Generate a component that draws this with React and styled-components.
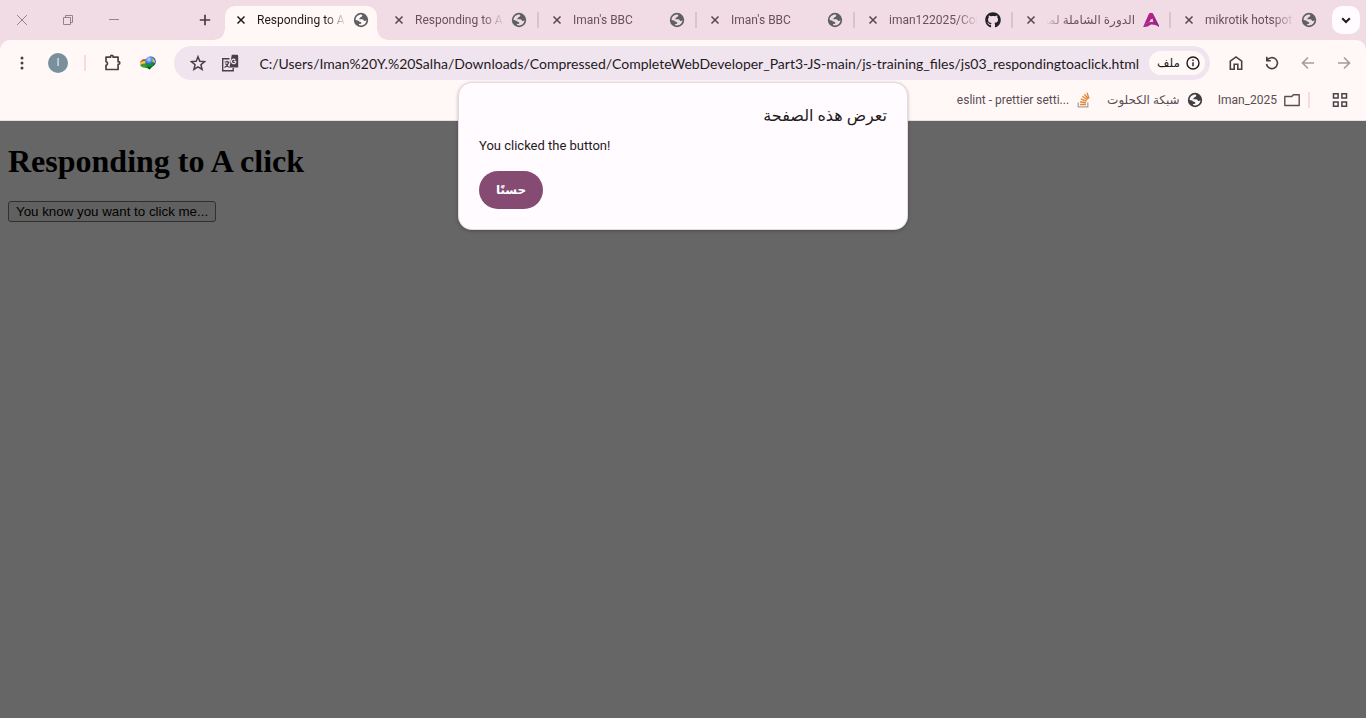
import React from "react";
import styled, { createGlobalStyle, css } from "styled-components";
import { FaGithub } from "react-icons/fa";

const ui = `Roboto, "Open Sans", "DejaVu Sans", sans-serif`;

const GlobalStyle = createGlobalStyle`
  * { box-sizing: border-box; }
  html, body { margin: 0; height: 100%; }
  #root { min-height: 100%; display: flex; flex-direction: column; background: #f1dce5; }
  button { font-family: ${ui}; cursor: pointer; }
`;

const Browser = styled.div`
  position: relative;
  flex: 1;
  min-height: 100vh;
  display: flex;
  flex-direction: column;
  font-family: ${ui};
  color: #1f1a1d;
`;

const TabStrip = styled.header`
  height: 40px;
  display: flex;
  align-items: center;
  padding-right: 6px;
  background: #f1dce5;
`;

const PlainButton = styled.button`
  border: 0;
  padding: 0;
  background: none;
  color: inherit;
  display: flex;
  align-items: center;
  justify-content: center;
  flex: none;
`;

const WindowButtons = styled.div`
  display: flex;
  width: 137px;
  flex: none;
  color: #96828b;
`;

const WindowButton = styled(PlainButton)`
  width: 46px;
  height: 40px;
`;

const NewTabButton = styled(PlainButton)`
  width: 28px;
  height: 28px;
  margin: 0 6px 0 54px;
  color: #4c3a43;
`;

const Tabs = styled.nav`
  flex: 1;
  min-width: 0;
  display: flex;
  align-self: stretch;
  align-items: flex-end;
  gap: 6px;
`;

const flare = css`
  content: "";
  position: absolute;
  bottom: 0;
  width: 10px;
  height: 10px;
`;

const TabBox = styled.div`
  position: relative;
  display: flex;
  align-items: center;
  width: 152px;
  height: 34px;
  padding: 0 8px 6px;
  color: ${(p) => (p.$active ? "#1f1a1d" : "#6a505c")};
  border-radius: 10px 10px 0 0;
  ${(p) =>
    p.$active
      ? css`
          background: #fff8f7;
          &::before {
            ${flare}
            left: -10px;
            background: radial-gradient(circle at 0 0, #f1dce5 9px, #fff8f7 10px);
          }
          &::after {
            ${flare}
            right: -10px;
            background: radial-gradient(circle at 100% 0, #f1dce5 9px, #fff8f7 10px);
          }
        `
      : p.$divided &&
        css`
          &::after {
            content: "";
            position: absolute;
            right: -4px;
            top: 6px;
            width: 2px;
            height: 16px;
            background: #d8c3cb;
          }
        `}
`;

const CloseButton = styled(PlainButton)`
  width: 16px;
  height: 16px;
  margin-right: 8px;
  color: ${(p) => (p.$active ? "#1f1a1d" : "#59434e")};
`;

const TabTitle = styled.a`
  width: 88px;
  margin-right: 8px;
  white-space: nowrap;
  font-size: 12px;
  line-height: 22px;
  color: inherit;
  text-decoration: none;
  mask-image: linear-gradient(
    ${(p) => (p.dir === "rtl" ? "to left" : "to right")},
    #000 68px,
    transparent 90px
  );
`;

const TabIcon = styled.span`
  display: flex;
  width: 16px;
  justify-content: center;
  flex: none;
`;

const TabSearch = styled(PlainButton)`
  width: 28px;
  height: 28px;
  border-radius: 10px;
  background: #fffbff;
  color: #1f1a1d;
`;

const Toolbars = styled.div`
  background: #fff8f7;
  border-radius: 10px 10px 0 0;
  border-bottom: 1px solid #e9dfe1;
  height: 81px;
`;

const AddressRow = styled.div`
  display: flex;
  align-items: center;
  height: 46px;
  padding: 0 4px;
  color: #4c4046;
`;

const ToolButton = styled(PlainButton)`
  width: 36px;
  height: 34px;
  opacity: ${(p) => (p.disabled ? 0.5 : 1)};
`;

const Avatar = styled.span`
  width: 20px;
  height: 20px;
  border-radius: 50%;
  background: #78909c;
  color: #eceff1;
  font-size: 11px;
  line-height: 20px;
  text-align: center;
`;

const Divider = styled.span`
  width: 2px;
  height: 16px;
  margin: 0 8px;
  background: #fbd9e4;
  flex: none;
`;

const AddressBar = styled.div`
  flex: 1;
  min-width: 0;
  height: 34px;
  margin: 0 8px;
  padding: 0 5px 0 8px;
  display: flex;
  align-items: center;
  border-radius: 17px;
  background: #f0e5ef;
`;

const BarButton = styled(PlainButton)`
  width: 32px;
  height: 32px;
`;

const UrlInput = styled.input`
  flex: 1;
  min-width: 0;
  height: 24px;
  margin: 0 10px 0 8px;
  padding: 0;
  border: 0;
  outline: 0;
  background: none;
  color: #1f1a1d;
  font-family: Lato, "Open Sans", sans-serif;
  font-size: 14px;
  text-align: right;
`;

const FileChip = styled(PlainButton)`
  width: 56px;
  height: 24px;
  padding-left: 3px;
  gap: 6px;
  border-radius: 12px;
  background: #fff8f7;
  color: #1f1a1d;
  font-size: 12px;
`;

const BookmarkRow = styled.div`
  display: flex;
  align-items: center;
  justify-content: flex-end;
  height: 28px;
  padding-right: 18px;
  color: #4c4046;
`;

const Bookmark = styled.a`
  display: flex;
  align-items: center;
  gap: 7px;
  margin-left: 15px;
  font-size: 12px;
  line-height: 20px;
  color: #5a4c53;
  text-decoration: none;
  white-space: nowrap;
`;

const AppsButton = styled(PlainButton)`
  width: 16px;
  height: 16px;
  margin-left: 14px;
`;

const Page = styled.main`
  flex: 1;
  padding: 0 8px;
  background: #666;
  color: #000;
`;

const Heading = styled.h1`
  margin: 22px 0 21px;
  font-family: "Liberation Serif", serif;
  font-size: 32px;
  line-height: 37px;
`;

const PageButton = styled.button`
  && { font-family: "Liberation Sans", sans-serif; }
  display: block;
  height: 21px;
  padding: 0 7px;
  border: 1px solid #303030;
  border-radius: 3px;
  background: #606060;
  color: #000;
`;

const Dialog = styled.section`
  position: absolute;
  top: 83px;
  left: 50%;
  transform: translateX(-50%);
  width: 448px;
  padding: 21px 20px 20px;
  border-radius: 13px;
  background: #fffbff;
  box-shadow: 0 0 0 1px #e4dadf, 0 1px 4px rgba(0, 0, 0, 0.4);
`;

const DialogTitle = styled.h2`
  margin: 0 0 8px;
  font-size: 16px;
  line-height: 24px;
  font-weight: 500;
`;

const DialogText = styled.p`
  margin: 0 0 15px;
  font-size: 13px;
  line-height: 20px;
`;

const OkButton = styled(PlainButton)`
  width: 64px;
  height: 38px;
  border-radius: 19px;
  background: #854b73;
  color: #fff;
  font-size: 12px;
  font-weight: 700;
`;

const Svg = ({ size = 16, children, ...rest }) => (
  <svg width={size} height={size} viewBox={`0 0 ${size} ${size}`} fill="none" stroke="currentColor" aria-hidden="true" {...rest}>
    {children}
  </svg>
);

const Globe = ({ color = "#5f6063", land = "#f1dce5" }) => (
  <Svg stroke="none">
    <circle cx="8" cy="8" r="7.2" fill={color} />
    <path fill={land} d="M2.600 8.100C2.600 5 5 2.600 8.400 2.600L9.300 3.200C9.300 4.300 8.600 4.900 7.400 5L7.200 6.200L5.800 6.700V7.300H9.200C10.300 7.300 10.900 8 10.900 9H12.200L13.400 8C13.400 11.200 11.100 13.400 8 13.400C7.300 13.400 6.600 13.300 6 13V12L8.200 11.700V10.200L6.200 9.600L5 8.600Z" />
  </Svg>
);

const CloseX = () => (
  <Svg size={16} strokeWidth="1.5"><path d="M4.5 4.5l7 7M11.5 4.5l-7 7" /></Svg>
);

const AcademyLogo = () => (
  <Svg stroke="none">
    <defs>
      <linearGradient id="academy" x1="0" y1="0" x2="1" y2="1">
        <stop offset="0" stopColor="#d01c8b" />
        <stop offset="1" stopColor="#7b2a80" />
      </linearGradient>
    </defs>
    <path fill="url(#academy)" d="M6 1.500Q8 0 10 1.500L16 13.500V15Q13 11.500 10.500 10.500L9.500 6.500Q7 7 6.500 10Q2 11.500.5 14Z" />
    <path fill="#a8248a" d="M0 15Q2.500 10.200 9.500 9.800Q13.500 10.400 16 14.800Q11.500 12 8 12.500Q4 15.500 0 15Z" />
  </Svg>
);

const tabs = [
  { title: "Responding to A", active: true, icon: <Globe land="#fff8f7" /> },
  { title: "Responding to A", icon: <Globe /> },
  { title: "Iman's BBC", icon: <Globe /> },
  { title: "Iman's BBC", icon: <Globe /> },
  { title: "iman122025/Con", icon: <FaGithub size={16} color="#24202a" /> },
  { title: "الدورة الشاملة لمد", dir: "rtl", icon: <AcademyLogo /> },
  { title: "mikrotik hotspot", icon: <Globe /> },
];

function Tab({ tab, divided }) {
  return (
    <TabBox $active={tab.active} $divided={divided}>
      <CloseButton $active={tab.active} aria-label="Close tab"><CloseX /></CloseButton>
      <TabTitle href="#" dir={tab.dir || "ltr"}>{tab.title}</TabTitle>
      <TabIcon>{tab.icon}</TabIcon>
    </TabBox>
  );
}

const Idm = () => (
  <Svg size={18} stroke="none">
    <defs>
      <radialGradient id="idm" cx=".35" cy=".3" r=".8">
        <stop offset="0" stopColor="#b9dcff" />
        <stop offset=".5" stopColor="#2f6fd0" />
        <stop offset="1" stopColor="#123b86" />
      </radialGradient>
    </defs>
    <ellipse cx="6" cy="9.500" rx="5" ry="4.200" fill="#e8d44a" />
    <path fill="#c8432b" d="M1.500 7.500Q4 4.500 7 5.200L6 7Q3 6.500 1.300 9Z" />
    <path fill="#3d9b38" d="M1.500 10.500Q4 9 7 9.500L9 13.500Q4 14.500 1.500 12Z" />
    <circle cx="11.500" cy="7.500" r="5.300" fill="url(#idm)" />
    <path fill="#efc23d" d="M13.500 4Q16.500 6 15.800 9L13.500 8Z" />
    <path fill="#15952b" d="M6.500 9L9 10.500L14.500 8.500V11L10.500 15.500L5.500 12.800L8 12.300Z" />
    <path fill="#0b5a18" d="M8 12.500L10.500 15.500L14.500 11L11 13Z" />
  </Svg>
);

export default function App() {
  return (
    <Browser>
      <GlobalStyle />
      <TabStrip>
        <WindowButtons>
          <WindowButton aria-label="Close"><Svg size={12}><path d="M0 1l10 10M10 1L0 11" /></Svg></WindowButton>
          <WindowButton aria-label="Restore"><Svg size={12}><path d="M.5 3.500h7v7h-7zM2.500 3.500v-2h7v7h-2" /></Svg></WindowButton>
          <WindowButton aria-label="Minimize"><Svg size={12}><path d="M0 5.500h10" /></Svg></WindowButton>
        </WindowButtons>
        <NewTabButton aria-label="New tab"><Svg size={12} strokeWidth="1.700"><path d="M6 .8v10.400M.8 6h10.400" /></Svg></NewTabButton>
        <Tabs aria-label="Tabs">
          {tabs.map((tab, i) => (
            <Tab key={i} tab={tab} divided={i < tabs.length - 1} />
          ))}
        </Tabs>
        <TabSearch aria-label="Search tabs"><Svg size={12} strokeWidth="2"><path d="M2.200 4.200L6 8l3.800-3.800" /></Svg></TabSearch>
      </TabStrip>

      <Toolbars>
        <AddressRow>
          <ToolButton aria-label="Menu">
            <Svg stroke="none" fill="currentColor"><circle cx="8" cy="3" r="1.500" /><circle cx="8" cy="8" r="1.500" /><circle cx="8" cy="13" r="1.500" /></Svg>
          </ToolButton>
          <ToolButton aria-label="Profile"><Avatar>I</Avatar></ToolButton>
          <Divider />
          <ToolButton aria-label="Extensions">
            <Svg size={18} strokeWidth="1.700"><path strokeLinejoin="round" d="M3 3.200H7.500V2.600a1.300 1.300 0 0 1 2.600 0v.6h5v4.500h.4a1.300 1.300 0 0 1 0 2.600h-.4v5.200H3v-4.200a1.900 1.900 0 0 0 0-3.700z" /></Svg>
          </ToolButton>
          <ToolButton aria-label="Download manager"><Idm /></ToolButton>
          <AddressBar>
            <BarButton aria-label="Bookmark this page">
              <Svg strokeWidth="1.500"><path d="M8 1.700l1.800 4.500 4.800.4-3.700 3.100 1.200 4.700L8 11.800l-4.100 2.600 1.200-4.700-3.700-3.100 4.800-.4z" /></Svg>
            </BarButton>
            <BarButton aria-label="Translate">
              <Svg size={18}>
                <path strokeWidth="1.400" d="M8.500 4.700H1.700v12h10.500V14" />
                <path strokeWidth="1.200" d="M3.500 8h5M6 6.800v1.200M7.800 8Q7 11.500 3.500 13.500M4.500 9.500Q6 12.500 8.500 13.500" />
                <path stroke="none" fill="currentColor" d="M10.800.8H16a1.200 1.200 0 0 1 1.200 1.200v11.500H8.500z" />
                <path stroke="#f0e5ef" strokeWidth="1.200" d="M15 7.300h-2.300M14.300 5.700a2.300 2.300 0 1 0 .7 1.800" />
              </Svg>
            </BarButton>
            <UrlInput aria-label="Address" readOnly value="C:/Users/Iman%20Y.%20Salha/Downloads/Compressed/CompleteWebDeveloper_Part3-JS-main/js-training_files/js03_respondingtoaclick.html" />
            <FileChip>
              <span dir="rtl">ملف</span>
              <Svg size={14} strokeWidth="1.400"><circle cx="7" cy="7" r="6" /><path d="M7 6.200v4M7 3.500v1.400" /></Svg>
            </FileChip>
          </AddressBar>
          <ToolButton aria-label="Home">
            <Svg strokeWidth="1.600"><path d="M2.300 6.200L8 1.900l5.700 4.300v8H9.800V9.200H6.200v5H2.300z" /></Svg>
          </ToolButton>
          <ToolButton aria-label="Reload">
            <Svg strokeWidth="1.600"><path d="M2.800 1.800v4h4M3 5.700a5.500 5.500 0 1 1-.5 3.300" /></Svg>
          </ToolButton>
          <ToolButton disabled aria-label="Forward">
            <Svg strokeWidth="1.600"><path d="M14 8H2.800M8 2.500L2.500 8 8 13.500" /></Svg>
          </ToolButton>
          <ToolButton disabled aria-label="Back">
            <Svg strokeWidth="1.600"><path d="M2 8h11.200M8 2.500L13.500 8 8 13.500" /></Svg>
          </ToolButton>
        </AddressRow>

        <BookmarkRow>
          <Bookmark href="#">
            eslint - prettier setti...
            <Svg>
              <path stroke="#a9a29b" strokeWidth="1.300" d="M2.200 10.500v4.300h9.600v-4.300" />
              <path stroke="#e08a3a" strokeWidth="1.400" d="M4 12.500h6M4.100 9.800l6 .9M4.900 7l5.700 2.200M6.300 4.300l5 3.500M8.400 2.200l3.900 4.800M11 .8l2 5.700" />
            </Svg>
          </Bookmark>
          <Bookmark href="#">
            <span dir="rtl">شبكة الكحلوت</span>
            <Globe color="#3c4043" land="#fff8f7" />
          </Bookmark>
          <Bookmark href="#">
            Iman_2025
            <Svg strokeWidth="1.400"><path strokeLinejoin="round" d="M.8 4.500h7l1.500-1.700h5.900v10.700H.8z" /></Svg>
          </Bookmark>
          <Divider />
          <AppsButton aria-label="Apps">
            <Svg strokeWidth="1.500"><path d="M1.500 1.700h4.600v4.200H1.500zM9.900 1.700h4.600v4.200H9.900zM1.500 10h4.600v4.200H1.500zM9.900 10h4.600v4.200H9.900z" /></Svg>
          </AppsButton>
        </BookmarkRow>
      </Toolbars>

      <Page>
        <Heading>Responding to A click</Heading>
        <PageButton>You know you want to click me...</PageButton>
      </Page>

      <Dialog role="dialog" aria-labelledby="dialog-title">
        <DialogTitle id="dialog-title" dir="rtl">تعرض هذه الصفحة</DialogTitle>
        <DialogText>You clicked the button!</DialogText>
        <OkButton dir="rtl">حسنًا</OkButton>
      </Dialog>
    </Browser>
  );
}
